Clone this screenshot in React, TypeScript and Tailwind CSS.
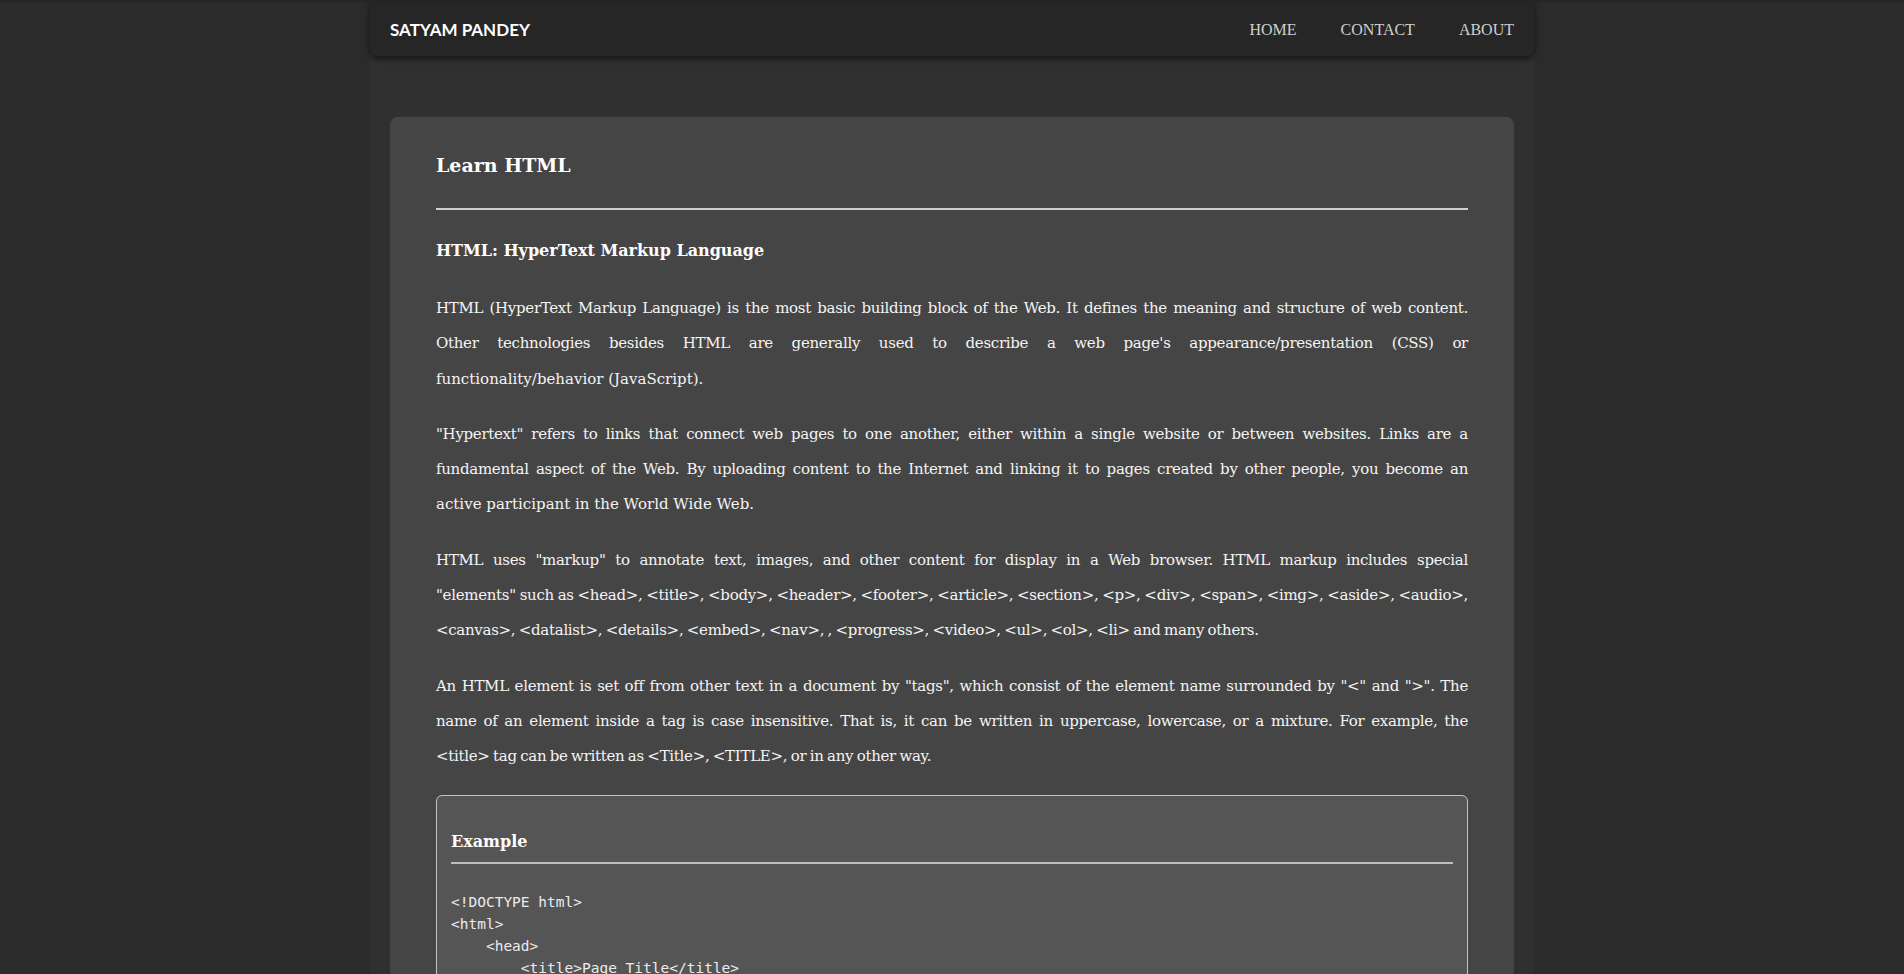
const paragraphs: { lines: string[]; relaxLast: boolean }[] = [
  {
    relaxLast: true,
    lines: [
      "HTML (HyperText Markup Language) is the most basic building block of the Web. It defines the meaning and structure of web content.",
      "Other technologies besides HTML are generally used to describe a web page's appearance/presentation (CSS) or",
      "functionality/behavior (JavaScript).",
    ],
  },
  {
    relaxLast: true,
    lines: [
      "\"Hypertext\" refers to links that connect web pages to one another, either within a single website or between websites. Links are a",
      "fundamental aspect of the Web. By uploading content to the Internet and linking it to pages created by other people, you become an",
      "active participant in the World Wide Web.",
    ],
  },
  {
    relaxLast: false,
    lines: [
      "HTML uses \"markup\" to annotate text, images, and other content for display in a Web browser. HTML markup includes special",
      "\"elements\" such as <head>, <title>, <body>, <header>, <footer>, <article>, <section>, <p>, <div>, <span>, <img>, <aside>, <audio>,",
      "<canvas>, <datalist>, <details>, <embed>, <nav>, , <progress>, <video>, <ul>, <ol>, <li> and many others.",
    ],
  },
  {
    relaxLast: false,
    lines: [
      "An HTML element is set off from other text in a document by \"tags\", which consist of the element name surrounded by \"<\" and \">\". The",
      "name of an element inside a tag is case insensitive. That is, it can be written in uppercase, lowercase, or a mixture. For example, the",
      "<title> tag can be written as <Title>, <TITLE>, or in any other way.",
    ],
  },
];

const code = [
  "<!DOCTYPE html>",
  "<html>",
  "    <head>",
  "        <title>Page Title</title>",
  "    </head>",
  "    <body>",
  "        <h1>This is a Heading</h1>",
  "        <p>This is a paragraph.</p>",
  "    </body>",
  "</html>",
];

export default function App() {
  const links = ["HOME", "CONTACT", "ABOUT"];
  return (
    <div className="min-h-screen bg-[#2b2b2b]">
      <div className="h-[3px] bg-[#262626]" />
      <div className="mx-auto min-h-[971px] w-[1164px] bg-[#303030] pb-10">
        <nav className="relative z-10 flex h-[53px] items-center justify-between rounded-b-[8px] bg-[#262626] pl-5 pr-5 shadow-[0_3px_6px_rgba(0,0,0,0.55)]">
          <span className="font-['Lato',sans-serif] text-[17px] font-bold text-white">SATYAM PANDEY</span>
          <ul className="flex gap-[44px]">
            {links.map((t) => (
              <li key={t}>
                <a className="font-['Liberation_Serif',serif] text-[16px] text-[#d0d0d0]">{t}</a>
              </li>
            ))}
          </ul>
        </nav>
        <main className="px-5 pt-[61px]">
          <article className="rounded-[8px] bg-[#454545] px-[46px] pt-8 pb-10 font-['DejaVu_Serif',serif] text-[#f4f4f4]">
            <h1 className="text-[19px] font-bold leading-[32px] text-white">Learn HTML</h1>
            <div className="mt-[27px] h-[2px] bg-[#cfcfcf]" />
            <h2 className="mt-[28px] text-[16px] font-bold leading-[26px] text-white">HTML: HyperText Markup Language</h2>
            <div className="mt-[27px] text-justify text-[15px] leading-[35.3px] tracking-[-0.3px] [word-spacing:-1px]">
              {paragraphs.map((para, pi) => (
                <p key={pi} className="mb-5">
                  {para.lines.map((line, li) => {
                    const isLast = li === para.lines.length - 1;
                    const cls = !isLast
                      ? "block [text-align-last:justify]"
                      : para.relaxLast
                        ? "block tracking-normal [word-spacing:normal]"
                        : "block";
                    return (
                      <span key={li} className={cls}>
                        {line}
                      </span>
                    );
                  })}
                </p>
              ))}
            </div>
            <section className="rounded-[6px] border border-[#c4c4c4] bg-[#555555] px-[14px] pt-[33px] pb-6">
              <h3 className="text-[16px] font-bold leading-[26px] text-white">Example</h3>
              <div className="mt-[7px] h-[2px] bg-[#bdbdbd]" />
              <pre className="mt-[27px] font-['DejaVu_Sans_Mono',monospace] text-[14.5px] leading-[22px] text-[#ececec]">
                {code.join("\n")}
              </pre>
            </section>
          </article>
        </main>
      </div>
    </div>
  );
}
